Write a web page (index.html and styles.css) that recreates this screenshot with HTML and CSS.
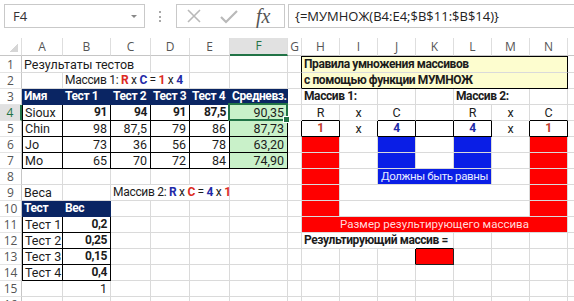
FILE: index.html
```html
<!DOCTYPE html>
<html lang="ru">
  <head>
    <meta charset="UTF-8" />
    <meta name="viewport" content="width=device-width, initial-scale=1.0" />
    <title>МУМНОЖ</title>
    <link rel="stylesheet" href="styles.css">
  </head>
  <body>
    <div class="formula-bar">
      <div class="name-box"><span>F4</span><span class="drop"></span></div>
      <div class="grip"></div>
      <div class="fx-buttons">
        <svg width="16" height="16" viewBox="0 0 16 16"><path d="M2 2 L14 14 M14 2 L2 14" stroke="#b9b9b9" stroke-width="1.6" fill="none" /></svg>
        <svg class="ok" width="20" height="16" viewBox="0 0 20 16"><path d="M2 9 L7 14 L18 3" stroke="#b9b9b9" stroke-width="2.2" fill="none" /></svg>
        <span class="fx">fx</span>
      </div>
      <div class="formula">{=МУМНОЖ(B4:E4;$B$11:$B$14)}</div>
    </div>

    <table class="sheet">
      <colgroup>
        <col style="width: 22px" />
        <col style="width: 41px" />
        <col style="width: 48px" />
        <col style="width: 40px" />
        <col style="width: 39px" />
        <col style="width: 40px" />
        <col style="width: 58px" />
        <col style="width: 14px" />
        <col style="width: 38px" />
        <col style="width: 38px" />
        <col style="width: 38px" />
        <col style="width: 38px" />
        <col style="width: 38px" />
        <col style="width: 38px" />
        <col style="width: 38px" />
        <col style="width: 60px" />
      </colgroup>
      <thead>
        <tr>
          <th class="corner"></th>
          <th>A</th><th>B</th><th>C</th><th>D</th><th>E</th>
          <th class="sel">F</th>
          <th>G</th><th>H</th><th>I</th><th>J</th><th>K</th><th>L</th><th>M</th><th>N</th><th>O</th>
        </tr>
      </thead>
      <tbody>
        <tr>
          <th class="rh">1</th>
          <td colspan="3">Результаты тестов</td><td></td><td></td><td></td>
          <td class="br"></td>
          <td colspan="7" class="note nt">Правила умножения массивов</td>
          <td></td>
        </tr>
        <tr>
          <th class="rh">2</th>
          <td></td>
          <td colspan="3" class="rich">Массив 1: <b class="cr">R</b> x <b class="cb">C</b> = <b class="cr">1</b> x <b class="cb">4</b></td>
          <td></td><td></td>
          <td class="br"></td>
          <td colspan="7" class="note nb">с помощью функции МУМНОЖ</td>
          <td></td>
        </tr>
        <tr>
          <th class="rh">3</th>
          <td class="hd">Имя</td><td class="hd">Тест 1</td><td class="hd">Тест 2</td><td class="hd">Тест 3</td><td class="hd">Тест 4</td><td class="hd">Средневз.</td>
          <td></td>
          <td colspan="2" class="b">Массив 1:</td><td></td><td></td>
          <td colspan="2" class="b">Массив 2:</td><td></td>
          <td></td>
        </tr>
        <tr>
          <th class="rh sel">4</th>
          <td class="box first">Sioux</td>
          <td class="box num b">91</td><td class="box num b">94</td><td class="box num b">91</td><td class="box num b">87,5</td>
          <td class="box num avg sel">90,35</td>
          <td></td>
          <td class="c bb">R</td><td class="c">x</td><td class="c bb">C</td><td class="bb"></td><td class="c bb">R</td><td class="c">x</td><td class="c bb">C</td>
          <td></td>
        </tr>
        <tr>
          <th class="rh">5</th>
          <td class="box first">Chin</td>
          <td class="box num">98</td><td class="box num">87,5</td><td class="box num">79</td><td class="box num">86</td>
          <td class="box num avg">87,73</td>
          <td class="br"></td>
          <td class="box c b cr2">1</td><td class="c br">x</td><td class="box c b cb">4</td><td class="box"></td><td class="box c b cb">4</td><td class="c br">x</td><td class="box c b cr2">1</td>
          <td></td>
        </tr>
        <tr>
          <th class="rh">6</th>
          <td class="box first">Jo</td>
          <td class="box num">73</td><td class="box num">36</td><td class="box num">56</td><td class="box num">78</td>
          <td class="box num avg">63,20</td>
          <td></td>
          <td class="red"></td><td class="wh"></td><td class="blue"></td><td class="wh"></td><td class="blue"></td><td class="wh"></td><td class="red"></td>
          <td></td>
        </tr>
        <tr>
          <th class="rh">7</th>
          <td class="box first">Mo</td>
          <td class="box num">65</td><td class="box num">70</td><td class="box num">72</td><td class="box num">84</td>
          <td class="box num avg">74,90</td>
          <td></td>
          <td class="red"></td><td class="wh"></td><td class="blue"></td><td class="wh"></td><td class="blue"></td><td class="wh"></td><td class="red"></td>
          <td></td>
        </tr>
        <tr>
          <th class="rh">8</th>
          <td></td><td></td><td></td><td></td><td></td><td></td>
          <td></td>
          <td class="red"></td><td class="wh"></td>
          <td colspan="3" class="blue c lbl lbl-blue">Должны быть равны</td>
          <td class="wh"></td><td class="red"></td>
          <td></td>
        </tr>
        <tr>
          <th class="rh">9</th>
          <td>Веса</td><td></td>
          <td colspan="3" class="rich">Массив 2: <b class="cb">R</b> x <b class="cr">C</b> = <b class="cb">4</b> x <b class="cr">1</b></td>
          <td></td>
          <td></td>
          <td class="red"></td><td colspan="5" class="wh"></td><td class="red"></td>
          <td></td>
        </tr>
        <tr>
          <th class="rh">10</th>
          <td class="hd">Тест</td><td class="hd">Вес</td>
          <td></td><td></td><td></td><td></td>
          <td></td>
          <td class="red"></td><td colspan="5" class="wh"></td><td class="red"></td>
          <td></td>
        </tr>
        <tr>
          <th class="rh">11</th>
          <td class="box first">Тест 1</td><td class="box num b">0,2</td>
          <td></td><td></td><td></td><td></td>
          <td></td>
          <td colspan="7" class="red c lbl lbl-red">Размер результирующего массива</td>
          <td></td>
        </tr>
        <tr>
          <th class="rh">12</th>
          <td class="box first">Тест 2</td><td class="box num b">0,25</td>
          <td></td><td></td><td></td><td></td>
          <td></td>
          <td colspan="3" class="b spill">Результирующий массив =</td>
          <td class="bb"></td><td></td><td></td><td></td>
          <td></td>
        </tr>
        <tr>
          <th class="rh">13</th>
          <td class="box first">Тест 3</td><td class="box num b">0,15</td>
          <td></td><td></td><td></td><td></td>
          <td></td>
          <td></td><td></td><td class="br"></td><td class="result"></td><td></td><td></td><td></td>
          <td></td>
        </tr>
        <tr>
          <th class="rh">14</th>
          <td class="box first">Тест 4</td><td class="box num b">0,4</td>
          <td></td><td></td><td></td><td></td>
          <td></td>
          <td></td><td></td><td></td><td></td><td></td><td></td><td></td>
          <td></td>
        </tr>
        <tr>
          <th class="rh">15</th>
          <td></td><td class="num">1</td>
          <td></td><td></td><td></td><td></td>
          <td></td>
          <td></td><td></td><td></td><td></td><td></td><td></td><td></td>
          <td></td>
        </tr>
        <tr>
          <th class="rh">16</th>
          <td></td><td></td><td></td><td></td><td></td><td></td>
          <td></td>
          <td></td><td></td><td></td><td></td><td></td><td></td><td></td>
          <td></td>
        </tr>
      </tbody>
    </table>
  </body>
</html>
```

FILE: styles.css
```css
body {
  margin: 0;
  background: #fff;
  color: #1c1c1c;
  font-family: Roboto, "Open Sans", sans-serif;
  overflow: hidden;
}

/* formula bar */

.formula-bar {
  display: flex;
  align-items: flex-start;
  height: 38px;
  padding: 4px 0 0 4px;
  box-sizing: border-box;
  font-family: "Open Sans", sans-serif;
}

.name-box {
  width: 141px;
  height: 24px;
  box-sizing: border-box;
  border: 1px solid #c9c9c9;
  display: flex;
  align-items: center;
  justify-content: space-between;
  padding: 0 7px 0 8px;
  font-size: 13px;
  color: #333;
}

.drop {
  width: 0;
  height: 0;
  border-left: 3px solid transparent;
  border-right: 3px solid transparent;
  border-top: 3px solid #888;
}

.grip {
  margin: 7px 0 0 14px;
  height: 11px;
  border-left: 2px dotted #a8a8a8;
}

.fx-buttons {
  margin-left: 15px;
  width: 109px;
  height: 24px;
  box-sizing: border-box;
  border: 1px solid #c9c9c9;
  display: flex;
  align-items: center;
  padding-left: 9px;
}

.fx-buttons .ok {
  margin-left: 17px;
}

.fx {
  margin-left: 17px;
  font-family: "Liberation Serif", serif;
  font-style: italic;
  font-size: 20px;
  color: #555;
  line-height: 20px;
}

.formula {
  margin-left: 3px;
  flex: 1;
  height: 24px;
  box-sizing: border-box;
  border: 1px solid #c9c9c9;
  border-right: none;
  padding-left: 6px;
  font-size: 13px;
  line-height: 22px;
  color: #222;
}

/* sheet */

.sheet {
  border-collapse: separate;
  border-spacing: 0;
  table-layout: fixed;
  width: 628px;
}

.sheet tbody tr {
  height: 16px;
}

.sheet td,
.sheet th.rh {
  padding: 0 2px;
  height: 15px;
  line-height: 15px;
  font-size: 12.5px;
  white-space: nowrap;
  border-right: 1px solid #dadada;
  border-bottom: 1px solid #dadada;
}

.sheet thead th {
  height: 17px;
  padding: 0;
  line-height: 17px;
  font-family: "Open Sans", sans-serif;
  font-weight: normal;
  font-size: 12px;
  color: #555;
  border-right: 1px solid #dedede;
  border-bottom: 1px solid #c6c6c6;
}

.sheet thead th.sel {
  background: #e1e1e1;
  color: #217346;
  border-bottom: 2px solid #217346;
  height: 16px;
  line-height: 16px;
}

.sheet th.corner {
  background: linear-gradient(135deg, transparent 50%, #d6d6d6 50%) no-repeat right 3px bottom 3px / 8px 8px;
}

.sheet th.rh {
  padding: 0;
  font-family: "Open Sans", sans-serif;
  font-weight: normal;
  font-size: 12px;
  color: #555;
  text-align: center;
  border-right: 1px solid #c6c6c6;
  border-bottom: 1px solid #e4e4e4;
}

.sheet th.rh.sel {
  background: #e1e1e1;
  color: #217346;
  border-right: 2px solid #217346;
}

/* cells */

.b {
  font-weight: bold;
}

.sheet td.b,
.sheet td.note {
  font-size: 12px;
  letter-spacing: -0.4px;
}

.sheet td.rich {
  font-size: 12px;
  letter-spacing: -0.3px;
}

.c {
  text-align: center;
}

.num {
  text-align: right;
  padding-right: 3px !important;
}

.cr {
  color: #dc2a22;
}

.cr2 {
  color: #c0392b;
}

.cb {
  color: #1f2aa8;
}

.sheet td.hd {
  background: #0a2563;
  color: #fff;
  font-weight: bold;
  font-size: 12px;
  letter-spacing: -0.4px;
  border-color: #0a2563;
}

.box {
  border-right-color: #000 !important;
  border-bottom-color: #000 !important;
}

.first {
  border-left: 1px solid #000;
}

.bb {
  border-bottom-color: #000 !important;
}

.br {
  border-right-color: #000 !important;
}

.avg {
  background: #c9f1c9;
}

.sheet td.sel {
  position: relative;
}

td.sel::before {
  content: "";
  position: absolute;
  top: -2px;
  left: -2px;
  right: -1px;
  bottom: -1px;
  border: 2px solid #217346;
  z-index: 1;
}

td.sel::after {
  content: "";
  position: absolute;
  right: -3px;
  bottom: -3px;
  width: 5px;
  height: 5px;
  background: #217346;
  border: 1px solid #fff;
  z-index: 2;
}

.note {
  background: #fdfdcf;
  font-weight: bold;
  border-right-color: #000 !important;
}

.nt {
  border-top: 1px solid #000;
  border-bottom-color: #fdfdcf;
}

.nb {
  border-bottom-color: #000 !important;
}

.red {
  background: #ff0000;
  border-color: #ff0000;
}

.blue {
  background: #0a1ee6;
  border-color: #0a1ee6;
}

.wh {
  background: #fff;
  border-color: #fff;
}

.sheet td.lbl {
  font-size: 11.5px;
  padding: 0;
}

.sheet td.lbl-blue {
  color: #e6eaff;
  letter-spacing: -0.4px;
}

.lbl-red {
  color: #ffdada;
}

.sheet td.spill {
  border-right-color: #fff;
}

.result {
  background: #ff0000;
  border-right-color: #222 !important;
  border-bottom-color: #222 !important;
}
```
